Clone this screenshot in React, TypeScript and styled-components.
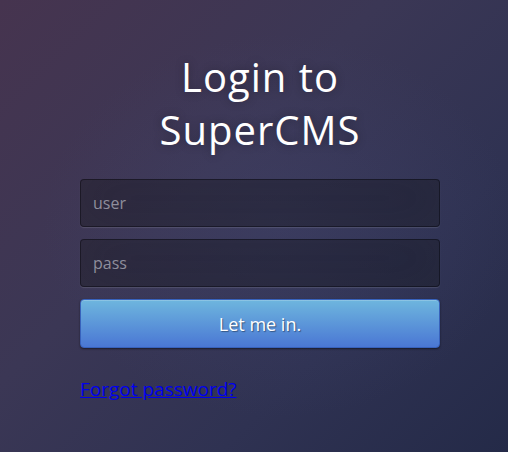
import React from "react";
import styled, { createGlobalStyle } from "styled-components";

const Global = createGlobalStyle`
  html, body { margin: 0; padding: 0; height: 100%; }
  body {
    font-family: "Open Sans", "Noto Sans", sans-serif;
    background:
      radial-gradient(ellipse at 55% 50%, rgba(70, 75, 120, 0.3) 0%, rgba(70, 75, 120, 0) 60%),
      linear-gradient(135deg, #46344f 0%, #3b3755 40%, #2f3252 70%, #242a48 100%);
    min-height: 452px;
  }
  #root { min-height: 452px; }
`;

const Page = styled.main`
  min-height: 452px;
  box-sizing: border-box;
  padding: 50px 0 0 80px;
`;

const Card = styled.form`
  width: 360px;
  display: flex;
  flex-direction: column;
`;

const Title = styled.h1`
  margin: 0 0 23px;
  color: #fff;
  font-weight: 400;
  font-size: 40px;
  line-height: 53px;
  letter-spacing: 1px;
  text-align: center;
  text-shadow: 0 0 10px rgba(0, 0, 0, 0.3);
`;

const Field = styled.input`
  box-sizing: border-box;
  width: 100%;
  height: 48px;
  margin-bottom: 12px;
  padding: 0 12px;
  font-family: inherit;
  font-size: 16px;
  color: #fff;
  background: rgba(0, 0, 0, 0.3);
  border: 1px solid rgba(0, 0, 0, 0.35);
  border-radius: 4px;
  outline: none;
  box-shadow: inset 0 -5px 45px rgba(100, 100, 100, 0.1), 0 1px 1px rgba(255, 255, 255, 0.12);
  &::placeholder { color: #8f8e9c; }
`;

const Submit = styled.button`
  box-sizing: border-box;
  width: 100%;
  height: 49px;
  font-family: inherit;
  font-size: 18px;
  color: #fff;
  text-shadow: 1px 1px 1px rgba(0, 0, 0, 0.4);
  background: linear-gradient(to bottom, #6eb6de, #4a77d4);
  border: 1px solid #3762bc;
  border-radius: 4px;
  box-shadow: inset 0 1px 0 rgba(255, 255, 255, 0.2), 0 1px 2px rgba(0, 0, 0, 0.5);
  cursor: pointer;
`;

const Forgot = styled.a`
  margin-top: 28px;
  align-self: flex-start;
  font-size: 19px;
  line-height: 26px;
  color: #0000ee;
  text-decoration: underline;
`;

export default function App() {
  return (
    <>
      <Global />
      <Page>
        <Card onSubmit={(e) => e.preventDefault()}>
          <Title>
            Login to
            <br />
            SuperCMS
          </Title>
          <Field type="text" placeholder="user" />
          <Field type="password" placeholder="pass" />
          <Submit type="submit">Let me in.</Submit>
          <Forgot href="#">Forgot password?</Forgot>
        </Card>
      </Page>
    </>
  );
}
